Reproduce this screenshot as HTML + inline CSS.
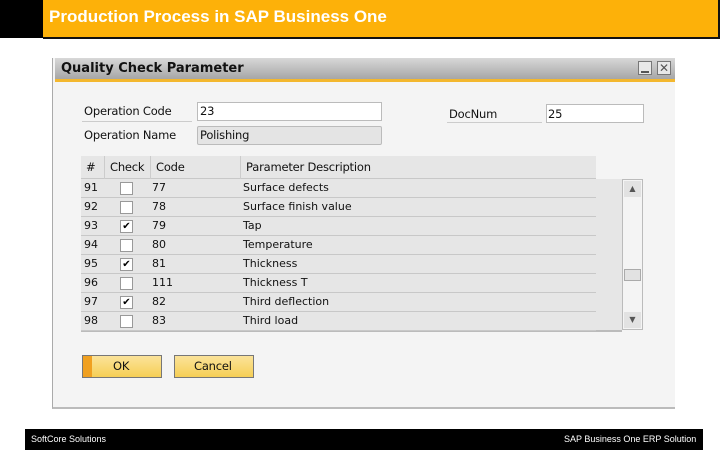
<!DOCTYPE html>
<html><head><style>
*{margin:0;padding:0;box-sizing:border-box}
body{width:720px;height:450px;background:#fff;position:relative;overflow:hidden;font-family:"DejaVu Sans","Liberation Sans",sans-serif}
.a{position:absolute}
.t{font-size:11.5px;color:#111;letter-spacing:-0.2px}
.row{position:absolute;left:81px;width:515px;height:19px;border-bottom:1px solid #c8c8c8;background:#e6e6e6}
.row div{position:absolute;top:0;height:18px;line-height:18px;font-size:11px;color:#111}
.cb{position:absolute;left:39px;top:3px;width:13px;height:13px;border:1px solid #999;background:#fff;font-size:10px;line-height:11px;text-align:center}
</style></head><body>
<div class="a" style="left:0;top:0;width:43px;height:38px;background:#000"></div>
<div class="a" style="left:43px;top:0;width:677px;height:39px;background:#fdb109;border-right:2px solid #111;border-bottom:2px solid #111"></div>
<div class="a" style="left:49px;top:7px;font-family:'Liberation Sans',sans-serif;font-weight:bold;font-size:17px;color:#fff">Production Process in SAP Business One</div>

<div class="a" style="left:52px;top:58px;width:623px;height:351px;background:#f4f4f4;border-left:1px solid #aaa;border-bottom:2px solid #bbb"></div>
<div class="a" style="left:55px;top:58px;width:620px;height:21px;background:linear-gradient(#d8d8d8,#a6a6a6)"></div>
<div class="a" style="left:55px;top:79px;width:620px;height:3px;background:#f3b72e"></div>
<div class="a" style="left:61px;top:61px;font-weight:bold;font-size:13px;color:#111">Quality Check Parameter</div>
<div class="a" style="left:638px;top:61px;width:14px;height:14px;border:1px solid #777;background:#e8e8e8"><div class="a" style="left:2px;top:9px;width:8px;height:2px;background:#555"></div></div>
<div class="a" style="left:657px;top:61px;width:14px;height:14px;border:1px solid #777;background:#e8e8e8;font-size:12px;line-height:12px;text-align:center;font-weight:bold;color:#555">✕</div>

<div class="a t" style="left:84px;top:104px">Operation Code</div>
<div class="a" style="left:82px;top:121px;width:110px;height:1px;background:#ccc"></div>
<div class="a" style="left:197px;top:102px;width:185px;height:19px;background:#fff;border:1px solid #bbb"></div>
<div class="a t" style="left:200px;top:104px">23</div>
<div class="a t" style="left:84px;top:128px">Operation Name</div>
<div class="a" style="left:197px;top:126px;width:185px;height:19px;background:#e4e4e4;border:1px solid #bbb;border-radius:2px"></div>
<div class="a t" style="left:200px;top:128px">Polishing</div>
<div class="a t" style="left:449px;top:107px">DocNum</div>
<div class="a" style="left:447px;top:122px;width:95px;height:1px;background:#ccc"></div>
<div class="a" style="left:546px;top:104px;width:98px;height:19px;background:#fff;border:1px solid #bbb"></div>
<div class="a t" style="left:548px;top:107px">25</div>

<div class="a" style="left:81px;top:156px;width:541px;height:176px;background:#e6e6e6;border-bottom:2px solid #bbb"></div>
<div class="a" style="left:596px;top:156px;width:26px;height:23px;background:#f4f4f4"></div>
<div class="a" style="left:81px;top:156px;width:515px;height:23px;border-bottom:1px solid #c8c8c8;background:#e6e6e6"></div>
<div class="a t" style="left:86px;top:160px">#</div>
<div class="a t" style="left:110px;top:160px">Check</div>
<div class="a t" style="left:156px;top:160px">Code</div>
<div class="a t" style="left:246px;top:160px">Parameter Description</div>
<div class="a" style="left:104px;top:156px;width:1px;height:175px;background:#ccc"></div>
<div class="a" style="left:104px;top:179px;width:46px;height:152px;background:#fff"></div>
<div class="a" style="left:150px;top:156px;width:1px;height:175px;background:#ccc"></div>
<div class="a" style="left:240px;top:156px;width:1px;height:175px;background:#ccc"></div>

<div class="row" style="top:179px"><div style="left:3px">91</div><span class="cb"></span><div style="left:71px">77</div><div style="left:162px">Surface defects</div></div>
<div class="row" style="top:198px"><div style="left:3px">92</div><span class="cb"></span><div style="left:71px">78</div><div style="left:162px">Surface finish value</div></div>
<div class="row" style="top:217px"><div style="left:3px">93</div><span class="cb">✔</span><div style="left:71px">79</div><div style="left:162px">Tap</div></div>
<div class="row" style="top:236px"><div style="left:3px">94</div><span class="cb"></span><div style="left:71px">80</div><div style="left:162px">Temperature</div></div>
<div class="row" style="top:255px"><div style="left:3px">95</div><span class="cb">✔</span><div style="left:71px">81</div><div style="left:162px">Thickness</div></div>
<div class="row" style="top:274px"><div style="left:3px">96</div><span class="cb"></span><div style="left:71px">111</div><div style="left:162px">Thickness T</div></div>
<div class="row" style="top:293px"><div style="left:3px">97</div><span class="cb">✔</span><div style="left:71px">82</div><div style="left:162px">Third deflection</div></div>
<div class="row" style="top:312px"><div style="left:3px">98</div><span class="cb"></span><div style="left:71px">83</div><div style="left:162px">Third load</div></div>
<style>.row .cb{left:39px}</style>

<div class="a" style="left:622px;top:179px;width:21px;height:151px;background:#f4f4f4;border:1px solid #bbb"></div>
<div class="a" style="left:624px;top:181px;width:17px;height:16px;background:#e2e2e2;font-size:8px;text-align:center;line-height:16px;color:#555">▲</div>
<div class="a" style="left:624px;top:269px;width:17px;height:12px;background:#e2e2e2;border:1px solid #aaa"></div>
<div class="a" style="left:624px;top:312px;width:17px;height:16px;background:#e2e2e2;font-size:8px;text-align:center;line-height:16px;color:#555">▼</div>

<div class="a" style="left:82px;top:355px;width:80px;height:23px;border:1px solid #777;background:linear-gradient(#fbe39a,#f6cf55)"><div class="a" style="left:0;top:0;width:9px;height:21px;background:#f0a020"></div></div>
<div class="a t" style="left:113px;top:359px">OK</div>
<div class="a" style="left:174px;top:355px;width:80px;height:23px;border:1px solid #777;background:linear-gradient(#fbe39a,#f6cf55)"></div>
<div class="a t" style="left:194px;top:359px">Cancel</div>

<div class="a" style="left:25px;top:429px;width:678px;height:21px;background:#000"></div>
<div class="a" style="left:31px;top:434px;font-size:9px;color:#fff;font-family:'Liberation Sans',sans-serif">SoftCore Solutions</div>
<div class="a" style="left:564px;top:434px;font-size:9px;color:#fff;font-family:'Liberation Sans',sans-serif">SAP Business One ERP Solution</div>
</body></html>
